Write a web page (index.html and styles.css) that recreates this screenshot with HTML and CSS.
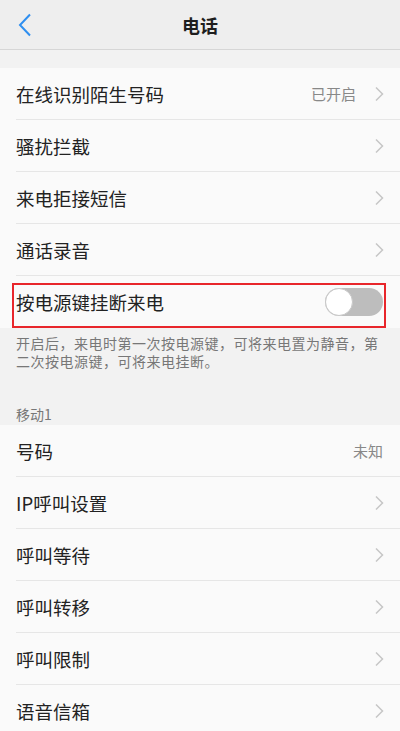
FILE: index.html
```html
<!DOCTYPE html>
<html lang="zh-CN">

<head>
    <meta charset="UTF-8">
    <meta name="viewport" content="width=device-width, initial-scale=1.0">
    <title>电话</title>
    <link rel="stylesheet" href="styles.css">
</head>

<body>
    <div class="header">
        <div class="back">
            <svg width="14" height="24" viewBox="0 0 14 24">
                <path d="M12 1.5 L2 12 L12 22.5" fill="none" stroke="#2f8ff0" stroke-width="2" />
            </svg>
        </div>
        <div class="title">电话</div>
    </div>

    <div class="gap"></div>

    <ul class="list">
        <li class="item">
            <span class="name">在线识别陌生号码</span>
            <span class="value">已开启</span>
            <span class="arrow"><svg width="10" height="16" viewBox="0 0 10 16"><path d="M2 1.5 L8.5 8 L2 14.5" fill="none" stroke="#c6c6c6" stroke-width="1.5" /></svg></span>
        </li>
        <li class="item">
            <span class="name">骚扰拦截</span>
            <span class="arrow"><svg width="10" height="16" viewBox="0 0 10 16"><path d="M2 1.5 L8.5 8 L2 14.5" fill="none" stroke="#c6c6c6" stroke-width="1.5" /></svg></span>
        </li>
        <li class="item">
            <span class="name">来电拒接短信</span>
            <span class="arrow"><svg width="10" height="16" viewBox="0 0 10 16"><path d="M2 1.5 L8.5 8 L2 14.5" fill="none" stroke="#c6c6c6" stroke-width="1.5" /></svg></span>
        </li>
        <li class="item">
            <span class="name">通话录音</span>
            <span class="arrow"><svg width="10" height="16" viewBox="0 0 10 16"><path d="M2 1.5 L8.5 8 L2 14.5" fill="none" stroke="#c6c6c6" stroke-width="1.5" /></svg></span>
        </li>
        <li class="item mark">
            <span class="name">按电源键挂断来电</span>
            <span class="switch"><span class="knob"></span></span>
            <div class="redbox"></div>
        </li>
    </ul>

    <div class="tip">
        <p class="desc">开启后，来电时第一次按电源键，可将来电置为静音，第二次按电源键，可将来电挂断。</p>
        <p class="group">移动1</p>
    </div>

    <ul class="list">
        <li class="item">
            <span class="name">号码</span>
            <span class="value last">未知</span>
        </li>
        <li class="item">
            <span class="name">IP呼叫设置</span>
            <span class="arrow"><svg width="10" height="16" viewBox="0 0 10 16"><path d="M2 1.5 L8.5 8 L2 14.5" fill="none" stroke="#c6c6c6" stroke-width="1.5" /></svg></span>
        </li>
        <li class="item">
            <span class="name">呼叫等待</span>
            <span class="arrow"><svg width="10" height="16" viewBox="0 0 10 16"><path d="M2 1.5 L8.5 8 L2 14.5" fill="none" stroke="#c6c6c6" stroke-width="1.5" /></svg></span>
        </li>
        <li class="item">
            <span class="name">呼叫转移</span>
            <span class="arrow"><svg width="10" height="16" viewBox="0 0 10 16"><path d="M2 1.5 L8.5 8 L2 14.5" fill="none" stroke="#c6c6c6" stroke-width="1.5" /></svg></span>
        </li>
        <li class="item">
            <span class="name">呼叫限制</span>
            <span class="arrow"><svg width="10" height="16" viewBox="0 0 10 16"><path d="M2 1.5 L8.5 8 L2 14.5" fill="none" stroke="#c6c6c6" stroke-width="1.5" /></svg></span>
        </li>
        <li class="item">
            <span class="name">语音信箱</span>
            <span class="arrow"><svg width="10" height="16" viewBox="0 0 10 16"><path d="M2 1.5 L8.5 8 L2 14.5" fill="none" stroke="#c6c6c6" stroke-width="1.5" /></svg></span>
        </li>
    </ul>
</body>

</html>
```

FILE: styles.css
```css
* {
    box-sizing: border-box;
}

body {
    margin: 0;
    background: #f2f2f2;
    font-family: "Noto Sans CJK SC", "Noto Sans", sans-serif;
    color: #222222;
}

.header {
    position: relative;
    height: 50px;
    background: #eeeeee;
    border-bottom: 1px solid #d6d6d6;
    display: flex;
    align-items: center;
    justify-content: center;
}

.back {
    position: absolute;
    left: 18px;
    top: 13px;
    height: 24px;
}

.title {
    font-size: 18px;
    font-weight: bold;
    color: #1e1e1e;
}

.gap {
    height: 18px;
}

.list {
    margin: 0;
    padding: 0;
    background: #fafafa;
}

.item {
    position: relative;
    list-style: none;
    height: 52px;
    margin-left: 16px;
    padding-right: 16px;
    display: flex;
    align-items: center;
    border-bottom: 1px solid #e6e6e6;
}

.item:last-child {
    border-bottom: none;
}

.name {
    flex: 1;
    font-size: 18.5px;
    color: #222222;
}

.value {
    font-size: 15px;
    color: #888888;
    margin-right: 18px;
}

.value.last {
    margin-right: 1px;
}

.arrow {
    width: 10px;
    height: 16px;
    display: flex;
}

.switch {
    position: relative;
    width: 58px;
    height: 28px;
    border-radius: 14px;
    background: #bdbdbd;
    margin-right: 1px;
}

.knob {
    position: absolute;
    left: 0;
    top: 0;
    width: 28px;
    height: 28px;
    border-radius: 50%;
    background: #ffffff;
    border: 1px solid #c8c8c8;
}

.redbox {
    position: absolute;
    left: -4px;
    right: 14px;
    top: 7px;
    bottom: 0px;
    border: 2px solid #e8262b;
}

.tip {
    padding: 6px 16px 0;
    height: 97px;
}

.desc {
    margin: 0;
    font-size: 14px;
    letter-spacing: 0.5px;
    line-height: 18px;
    color: #777777;
}

.group {
    margin: 34px 0 0;
    font-size: 14px;
    color: #777777;
}
```
